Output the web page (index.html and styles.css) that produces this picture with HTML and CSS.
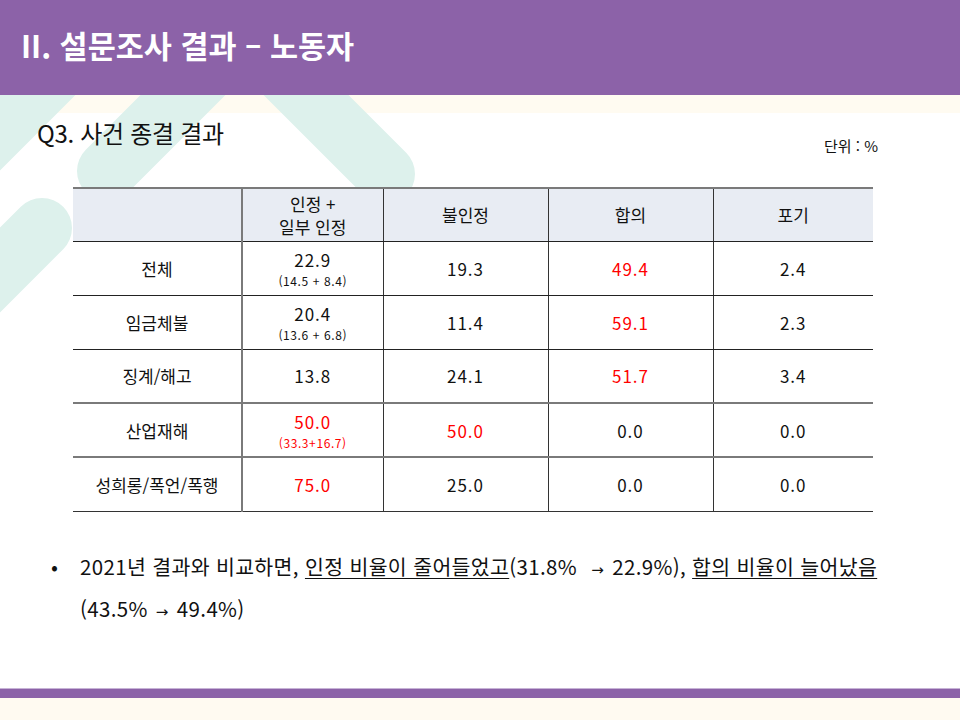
FILE: index.html
```html
<!DOCTYPE html>
<html lang="ko">
<head>
<meta charset="utf-8">
<title>II. 설문조사 결과 – 노동자</title>
<link rel="stylesheet" href="styles.css">
</head>
<body>
<svg class="deco" width="960" height="720" viewBox="0 0 960 720" aria-hidden="true">
  <g stroke="#DDF1EC" stroke-width="60" stroke-linecap="round" fill="none">
    <line x1="111" y1="-100" x2="385" y2="174"/>
    <line x1="378" y1="-100" x2="107" y2="171"/>
    <line x1="228" y1="-100" x2="-100" y2="228"/>
    <line x1="42" y1="228" x2="-200" y2="470"/>
  </g>
</svg>
<header class="topbar">
  <h1>II. 설문조사 결과 – 노동자</h1>
</header>
<div class="strip"></div>
<main class="content">
  <div class="title-row">
    <h2 class="qtitle">Q3. 사건 종결 결과</h2>
    <div class="unit">단위 : %</div>
  </div>
  <table class="result">
    <colgroup>
      <col class="c1"><col class="c2"><col class="c3"><col class="c4"><col class="c5">
    </colgroup>
    <thead>
      <tr>
        <th></th>
        <th class="sep"><span class="hl">인정 +</span><span class="hl">일부 인정</span></th>
        <th>불인정</th>
        <th>합의</th>
        <th>포기</th>
      </tr>
    </thead>
    <tbody>
      <tr>
        <td>전체</td>
        <td class="sep"><span class="num">22.9</span><span class="sub">(14.5 + 8.4)</span></td>
        <td><span class="num">19.3</span></td>
        <td class="red"><span class="num">49.4</span></td>
        <td><span class="num">2.4</span></td>
      </tr>
      <tr>
        <td>임금체불</td>
        <td class="sep"><span class="num">20.4</span><span class="sub">(13.6 + 6.8)</span></td>
        <td><span class="num">11.4</span></td>
        <td class="red"><span class="num">59.1</span></td>
        <td><span class="num">2.3</span></td>
      </tr>
      <tr>
        <td>징계/해고</td>
        <td class="sep"><span class="num">13.8</span></td>
        <td><span class="num">24.1</span></td>
        <td class="red"><span class="num">51.7</span></td>
        <td><span class="num">3.4</span></td>
      </tr>
      <tr class="graytop">
        <td>산업재해</td>
        <td class="sep red"><span class="num">50.0</span><span class="sub">(33.3+16.7)</span></td>
        <td class="red"><span class="num">50.0</span></td>
        <td><span class="num">0.0</span></td>
        <td><span class="num">0.0</span></td>
      </tr>
      <tr class="graytop">
        <td>성희롱/폭언/폭행</td>
        <td class="sep red"><span class="num">75.0</span></td>
        <td><span class="num">25.0</span></td>
        <td><span class="num">0.0</span></td>
        <td><span class="num">0.0</span></td>
      </tr>
    </tbody>
  </table>
  <ul class="notes">
    <li><span class="dot">•</span><span class="txt">2021년 결과와 비교하면, <u>인정 비율이 줄어들었고</u>(31.8%&nbsp; <span class="arrow">→</span> 22.9%), <u>합의 비율이 늘어났음</u><br>(43.5% <span class="arrow">→</span> 49.4%)</span></li>
  </ul>
</main>
<footer class="bottom">
  <div class="bar"></div>
  <div class="cream"></div>
</footer>
</body>
</html>
```

FILE: styles.css
```css
* { box-sizing: border-box; }
html, body { margin: 0; padding: 0; }
body {
  width: 960px;
  height: 720px;
  position: relative;
  overflow: hidden;
  background: #ffffff;
  font-family: "Noto Sans CJK KR", "Noto Sans", sans-serif;
  color: #111;
  display: flex;
  flex-direction: column;
}
.deco {
  position: absolute;
  left: 0;
  top: 0;
  z-index: 1;
}
.topbar {
  position: relative;
  z-index: 2;
  height: 95px;
  background: #8C62A8;
  display: flex;
  align-items: center;
  padding-left: 21px;
  padding-bottom: 6px;
}
.topbar h1 {
  margin: 0;
  color: #fff;
  font-size: 30.5px;
  font-weight: 700;
  letter-spacing: 0;
}
.strip {
  height: 18px;
  background: #FFFBF1;
}
.content {
  position: relative;
  z-index: 2;
  padding-left: 37px;
}
.title-row {
  display: flex;
  justify-content: space-between;
  align-items: flex-start;
  padding-right: 82px;
  padding-top: 5px;
}
.qtitle {
  margin: 0;
  font-size: 24px;
  font-weight: 400;
  line-height: 30px;
  letter-spacing: -0.3px;
}
.unit {
  margin-top: 17px;
  font-size: 15px;
  line-height: 22px;
}
.result {
  margin-top: 30px;
  margin-left: 36px;
  width: 800px;
  table-layout: fixed;
  border-collapse: collapse;
  background: #fff;
  font-size: 17px;
}
.c1 { width: 169px; }
.c2 { width: 141px; }
.c3 { width: 165px; }
.c4 { width: 165px; }
.c5 { width: 160px; }
.result th, .result td {
  text-align: center;
  vertical-align: middle;
  padding: 0;
  border-left: 1px solid #333;
  border-bottom: 1px solid #222;
}
.result th:first-child, .result td:first-child { border-left: none; }
.result .sep { border-left: 2px solid #7a7a7a; }
.result thead tr { height: 53px; }
.result thead th {
  background: #E8ECF3;
  font-weight: 400;
  border-top: 2px solid #7a7a7a;
  line-height: 25px;
}
.hl { display: block; line-height: 23px; }
.result tbody tr { height: 54px; }
.result tbody tr.graytop td { border-top: 2px solid #7a7a7a; }
.result tbody tr:last-child td { border-bottom: 1px solid #333; }
.num {
  display: block;
  line-height: 25px;
  letter-spacing: 1px;
}
.sub {
  display: block;
  font-size: 12px;
  line-height: 17px;
  letter-spacing: 0.6px;
}
.red { color: #FF0000; }
.notes {
  list-style: none;
  margin: 35px 0 0 0;
  padding: 0;
  font-size: 20.5px;
  line-height: 38px;
  letter-spacing: 0.35px;
}
.notes li { display: flex; }
.dot {
  width: 43px;
  padding-left: 14px;
  flex: none;
}
.notes u { text-underline-offset: 3px; text-decoration-thickness: 1px; }
.arrow {
  font-family: "DejaVu Sans", sans-serif;
  font-size: 15px;
  padding: 0 2px;
}
.bottom {
  margin-top: auto;
  position: relative;
  z-index: 2;
}
.bar {
  height: 10px;
  background: #8C62A8;
  border-top: 1px solid #C7B3D6;
}
.cream {
  height: 22px;
  background: #FFFAF1;
}
```
